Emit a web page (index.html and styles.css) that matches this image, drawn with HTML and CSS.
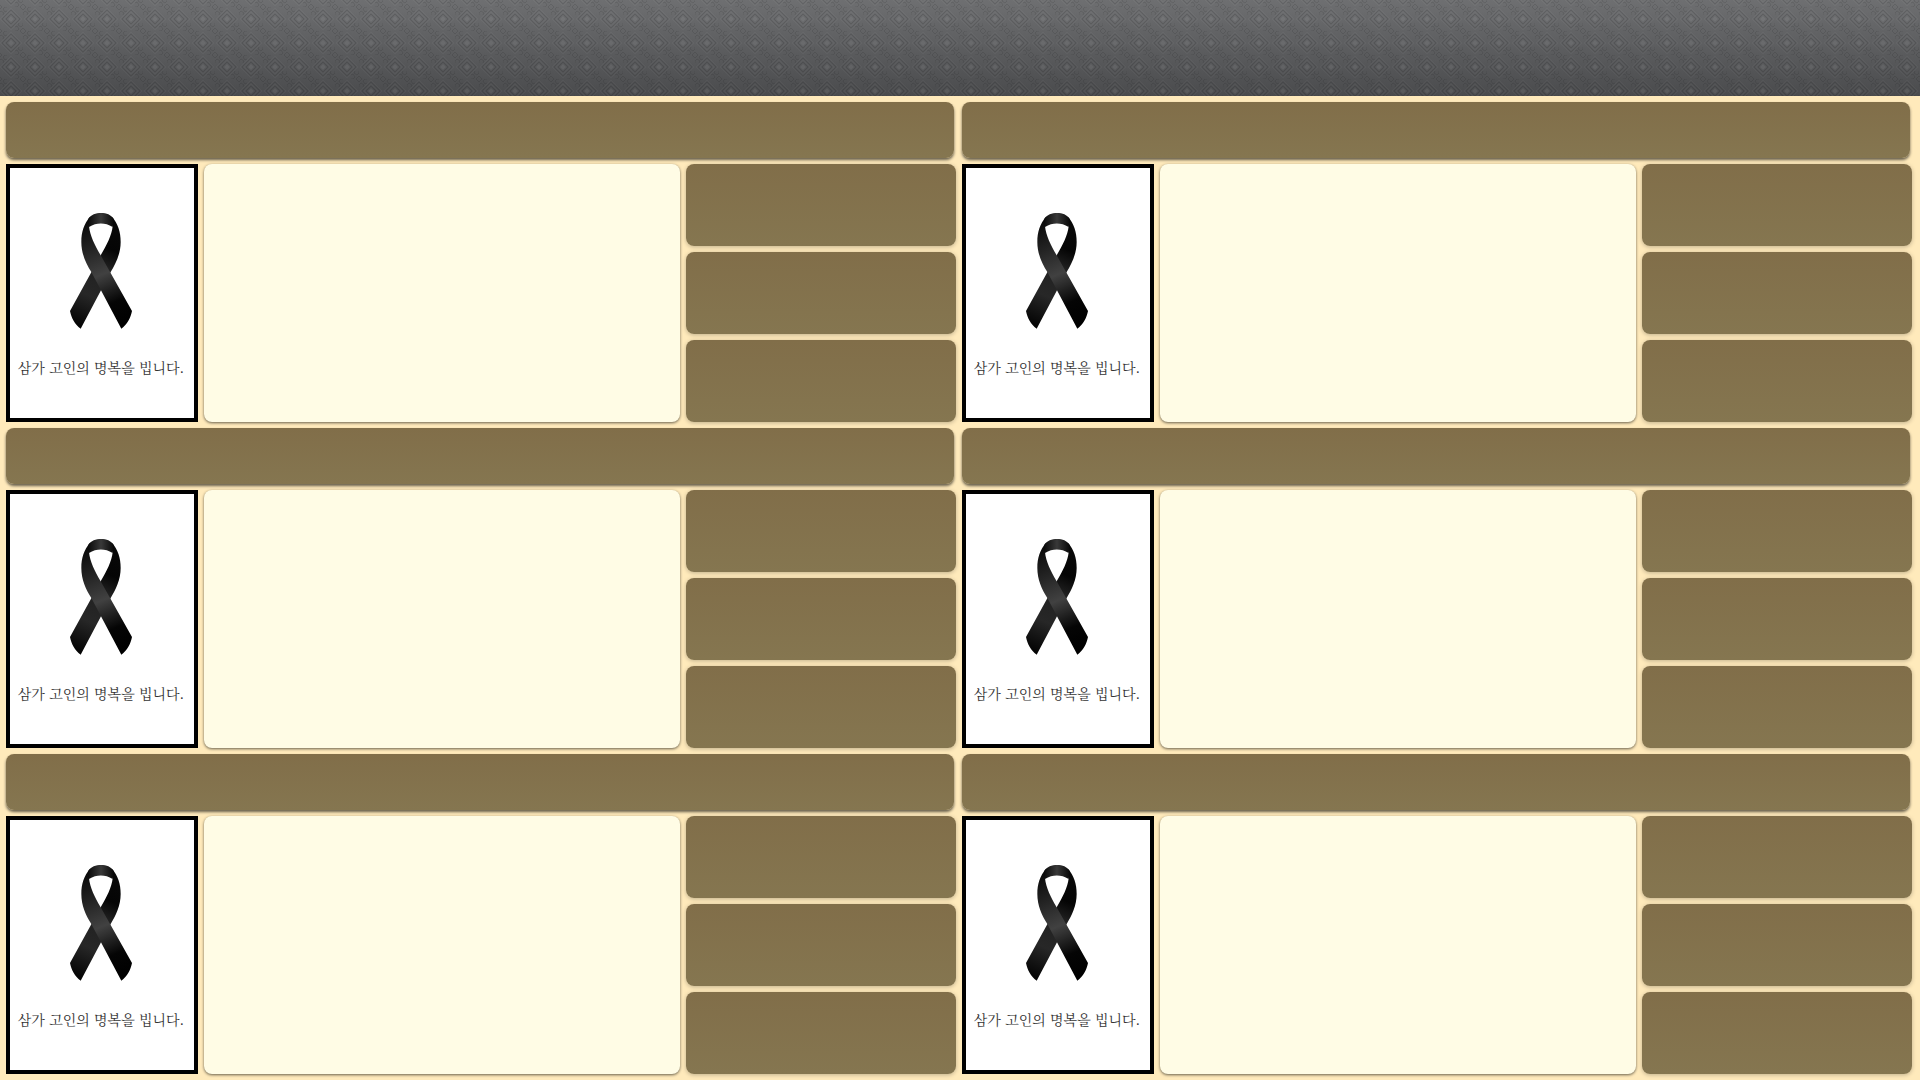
FILE: index.html
```html
<!DOCTYPE html>
<html lang="ko">
<head>
<meta charset="utf-8">
<title>빈소 안내</title>
<link rel="stylesheet" href="styles.css">
</head>
<body>
<header class="banner">
  <svg class="banner-pattern" aria-hidden="true">
    <defs>
      <pattern id="weave" x="-1" y="7" width="24" height="24" patternUnits="userSpaceOnUse">
        <g fill="none" stroke="#000" stroke-opacity=".1">
          <path d="M12 3 21 12 12 21 3 12ZM12 7 17 12 12 17 7 12Z"/>
          <path d="M0 3 3 0M21 24 24 21M0 21 3 24M21 0 24 3M0 8V6L2 4 5 6 4 8M24 16V18L22 20 19 18 20 16M8 0H6L4 2 6 5 8 4M16 24H18L20 22 18 19 16 20"/>
        </g>
        <g fill="none" stroke="#fff" stroke-opacity=".03">
          <path d="M12 1 23 12 12 23 1 12ZM12 5 19 12 12 19 5 12Z"/>
        </g>
        <path d="M12 9 15 12 12 15 9 12Z" fill="#fff" fill-opacity=".07"/>
      </pattern>
    </defs>
    <rect width="100%" height="100%" fill="url(#weave)"/>
  </svg>
</header>

<svg class="sprite" aria-hidden="true">
  <defs>
    <linearGradient id="back" gradientUnits="userSpaceOnUse" x1="205" y1="90" x2="80" y2="370">
      <stop offset="0" stop-color="#080808"/><stop offset=".2" stop-color="#050505"/><stop offset=".38" stop-color="#202020"/><stop offset=".7" stop-color="#272727"/><stop offset="1" stop-color="#050505"/>
    </linearGradient>
    <linearGradient id="front" gradientUnits="userSpaceOnUse" x1="100" y1="70" x2="225" y2="370">
      <stop offset="0" stop-color="#0a0a0a"/><stop offset=".25" stop-color="#242424"/><stop offset=".5" stop-color="#414141"/><stop offset=".78" stop-color="#050505"/><stop offset="1" stop-color="#000"/>
    </linearGradient>
    <linearGradient id="cap" gradientUnits="userSpaceOnUse" x1="115" y1="0" x2="191" y2="0">
      <stop offset="0" stop-color="#0a0a0a"/><stop offset=".5" stop-color="#393939"/><stop offset="1" stop-color="#080808"/>
    </linearGradient>
    <symbol id="ribbon" viewBox="60 38 186 348">
      <path fill="url(#back)" d="M186 50C204 70 212 95 212 125C212 160 197 190 182 215L92 385C74 372 64 352 60 332L152 165C170 135 185 105 188 78Z"/>
      <path fill="url(#front)" d="M120 50C102 70 94 95 94 125C94 160 108 190 124 215L214 385C232 372 242 352 246 332L152 165C134 135 120 105 117 78Z"/>
      <path fill="url(#cap)" d="M117 80L114 57C123 42 138 38 153 38C170 38 182 42 192 57L188 80C165 66 140 66 117 80Z"/>
    </symbol>
  </defs>
</svg>

<main class="rooms">
  <section class="room">
    <div class="bar"></div>
    <figure class="photo"><svg class="ribbon"><use href="#ribbon"/></svg><figcaption>삼가 고인의 명복을 빕니다.</figcaption></figure>
    <div class="family"></div>
    <div class="details"><div class="detail"></div><div class="detail"></div><div class="detail"></div></div>
  </section>
  <section class="room">
    <div class="bar"></div>
    <figure class="photo"><svg class="ribbon"><use href="#ribbon"/></svg><figcaption>삼가 고인의 명복을 빕니다.</figcaption></figure>
    <div class="family"></div>
    <div class="details"><div class="detail"></div><div class="detail"></div><div class="detail"></div></div>
  </section>
  <section class="room">
    <div class="bar"></div>
    <figure class="photo"><svg class="ribbon"><use href="#ribbon"/></svg><figcaption>삼가 고인의 명복을 빕니다.</figcaption></figure>
    <div class="family"></div>
    <div class="details"><div class="detail"></div><div class="detail"></div><div class="detail"></div></div>
  </section>
  <section class="room">
    <div class="bar"></div>
    <figure class="photo"><svg class="ribbon"><use href="#ribbon"/></svg><figcaption>삼가 고인의 명복을 빕니다.</figcaption></figure>
    <div class="family"></div>
    <div class="details"><div class="detail"></div><div class="detail"></div><div class="detail"></div></div>
  </section>
  <section class="room">
    <div class="bar"></div>
    <figure class="photo"><svg class="ribbon"><use href="#ribbon"/></svg><figcaption>삼가 고인의 명복을 빕니다.</figcaption></figure>
    <div class="family"></div>
    <div class="details"><div class="detail"></div><div class="detail"></div><div class="detail"></div></div>
  </section>
  <section class="room">
    <div class="bar"></div>
    <figure class="photo"><svg class="ribbon"><use href="#ribbon"/></svg><figcaption>삼가 고인의 명복을 빕니다.</figcaption></figure>
    <div class="family"></div>
    <div class="details"><div class="detail"></div><div class="detail"></div><div class="detail"></div></div>
  </section>
</main>
</body>
</html>
```
FILE: styles.css
```css
* {
  box-sizing: border-box;
}

body {
  margin: 0;
  background: #ffeabb;
  font-family: "Noto Serif CJK KR", "Noto Sans CJK KR", sans-serif;
}

.banner {
  height: 96px;
  background: linear-gradient(#6e6f71, #4a4b4d);
}

.banner-pattern {
  display: block;
  width: 100%;
  height: 100%;
}

.sprite {
  position: absolute;
  width: 0;
  height: 0;
}

.rooms {
  display: grid;
  grid-template-columns: 1fr 1fr;
  gap: 6px;
  padding: 6px 8px 6px 6px;
}

.room {
  display: grid;
  grid-template-columns: 192px 1fr 270px;
  gap: 6px;
}

.bar,
.detail {
  border-radius: 8px;
  background: linear-gradient(#816e49, #857650);
}

.bar {
  grid-column: 1 / -1;
  height: 56px;
  margin-right: 2px;
  box-shadow: 0 2px 3px rgba(0, 0, 0, 0.6);
}

.photo {
  display: flex;
  flex-direction: column;
  align-items: center;
  min-height: 258px;
  margin: 0;
  padding: 45px 2px 0 0;
  border: 4px solid #000;
  background: #fff;
}

.ribbon {
  width: 62px;
  height: 116px;
}

.photo figcaption {
  margin-top: 26px;
  color: #333;
  font-size: 14px;
  line-height: 24px;
  white-space: nowrap;
}

.family {
  border-radius: 8px;
  background: #fffce5;
  box-shadow: 0 1px 3px rgba(0, 0, 0, 0.6);
}

.details {
  display: grid;
  grid-template-rows: repeat(3, 1fr);
  gap: 6px;
}

.detail {
  box-shadow: 0 1px 4px rgba(0, 0, 0, 0.25);
}
```
